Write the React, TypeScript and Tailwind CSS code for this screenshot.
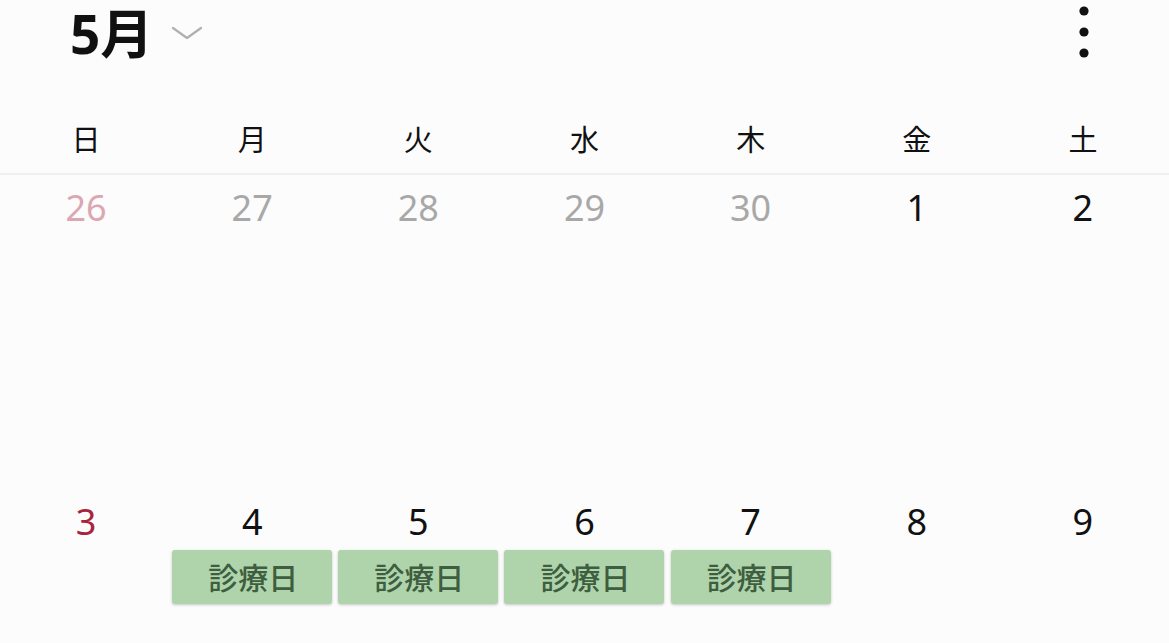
import React from "react";

const FONT = '"Noto Sans", "Noto Sans CJK JP", sans-serif';

const weekdays = ["日", "月", "火", "水", "木", "金", "土"];

type Day = { n: number; cls: string; chip?: boolean };

const rows: Day[][] = [
  [
    { n: 26, cls: "text-[#dba7b3]" },
    { n: 27, cls: "text-[#a8a8a8]" },
    { n: 28, cls: "text-[#a8a8a8]" },
    { n: 29, cls: "text-[#a8a8a8]" },
    { n: 30, cls: "text-[#a8a8a8]" },
    { n: 1, cls: "text-[#111111]" },
    { n: 2, cls: "text-[#111111]" },
  ],
  [
    { n: 3, cls: "text-[#a8243c]" },
    { n: 4, cls: "text-[#111111]", chip: true },
    { n: 5, cls: "text-[#111111]", chip: true },
    { n: 6, cls: "text-[#111111]", chip: true },
    { n: 7, cls: "text-[#111111]", chip: true },
    { n: 8, cls: "text-[#111111]" },
    { n: 9, cls: "text-[#111111]" },
  ],
];

export default function App() {
  return (
    <div
      className="w-[1169px] h-[643px] overflow-hidden bg-[#fcfcfc] flex flex-col"
      style={{ fontFamily: FONT }}
    >
      {/* Header */}
      <div className="h-[68px] shrink-0 flex items-center pl-[70px] pr-[78px]">
        <div className="text-[53px] leading-[64px] font-bold text-[#111111]">
          5月
        </div>
        <svg width="32" height="16" viewBox="0 0 32 16" className="ml-[18px] mt-[-2px]">
          <polyline
            points="2,3 16,13 30,3"
            fill="none"
            stroke="#b0b0b0"
            strokeWidth="2.2"
            strokeLinecap="round"
            strokeLinejoin="round"
          />
        </svg>
        <div className="flex-1" />
        <svg width="14" height="56" viewBox="0 0 14 56" className="mt-[-4px]">
          <circle cx="7" cy="7" r="4.6" fill="#111" />
          <circle cx="7" cy="28" r="4.6" fill="#111" />
          <circle cx="7" cy="49" r="4.6" fill="#111" />
        </svg>
      </div>

      {/* Weekday header */}
      <div className="grid grid-cols-7 shrink-0 px-[3px] pt-[54px] pb-[15px] border-b-2 border-[#efefef]">
        {weekdays.map((w) => (
          <div
            key={w}
            className="text-center text-[29px] leading-[36px] text-[#111111]"
          >
            {w}
          </div>
        ))}
      </div>

      {/* Weeks */}
      {rows.map((row, i) => (
        <div key={i} className="grid grid-cols-7 px-[3px] h-[314px] shrink-0">
          {row.map((d) => (
            <div key={d.n} className="flex flex-col items-center pt-[10px]">
              <div className={`text-[36px] leading-[46px] ${d.cls}`}>{d.n}</div>
              {d.chip && (
                <div className="mt-[5px] w-[160px] h-[54px] rounded-[3px] bg-[#afd4ac] shadow-[0_1px_3px_rgba(0,0,0,0.22)] flex items-center justify-center pl-[2px] text-[30px] font-medium text-[#3e5e3f]">
                  診療日
                </div>
              )}
            </div>
          ))}
        </div>
      ))}
    </div>
  );
}
